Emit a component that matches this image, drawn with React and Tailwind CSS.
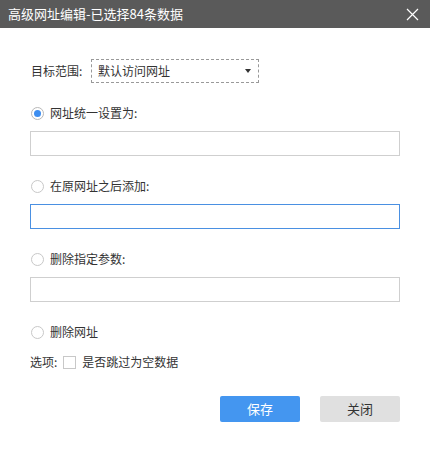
import React, { useState } from 'react';

const font = { fontFamily: '"Noto Sans CJK SC", "Noto Sans", sans-serif' };

const Radio = ({ checked }) => (
    <span
        className={`flex h-[13px] w-[13px] items-center justify-center rounded-full border ${checked ? 'border-[#b8b8b8]' : 'border-[#c8c8c8]'} bg-white`}
    >
        {checked && <span className="h-[7px] w-[7px] rounded-full bg-[#3e8ef0]" />}
    </span>
);

const App = () => {
    const [mode] = useState(0);

    return (
        <div className="h-[452px] w-[430px] bg-white text-[12px] text-[#333]" style={font}>
            {/* barra de título */}
            <div className="flex h-[28px] items-center justify-between bg-[#5a5a5a] pl-[8px] pr-[11px] text-[13px] text-white">
                <span>高级网址编辑-已选择84条数据</span>
                <svg width="13" height="13" viewBox="0 0 13 13" fill="none" stroke="white" strokeWidth="1.2">
                    <path d="M1 1 L12 12 M12 1 L1 12" />
                </svg>
            </div>

            <div className="px-[30px] pt-[31px]">
                <div className="flex items-center">
                    <span className="w-[61px] pl-[1px]">目标范围:</span>
                    <div className="flex h-[24px] w-[168px] items-center justify-between border border-dashed border-[#999] pl-[6px] pr-[7px]">
                        <span>默认访问网址</span>
                        <svg width="6" height="4" viewBox="0 0 6 4">
                            <path d="M0 0 L6 0 L3 4 Z" fill="#333" />
                        </svg>
                    </div>
                </div>

                <div className="mt-[18px] flex h-[24px] items-center gap-[6px] pl-[1px]">
                    <Radio checked={mode === 0} />
                    <span>网址统一设置为:</span>
                </div>
                <div className="mt-[6px] h-[25px] w-[370px] border border-[#cfcfcf]" />

                <div className="mt-[18px] flex h-[24px] items-center gap-[6px] pl-[1px]">
                    <Radio checked={mode === 1} />
                    <span>在原网址之后添加:</span>
                </div>
                <div className="mt-[6px] h-[25px] w-[370px] border border-[#4a90e2]" />

                <div className="mt-[18px] flex h-[24px] items-center gap-[6px] pl-[1px]">
                    <Radio checked={mode === 2} />
                    <span>删除指定参数:</span>
                </div>
                <div className="mt-[6px] h-[25px] w-[370px] border border-[#cfcfcf]" />

                <div className="mt-[18px] flex h-[24px] items-center gap-[6px] pl-[1px]">
                    <Radio checked={mode === 3} />
                    <span>删除网址</span>
                </div>

                <div className="mt-[6px] flex h-[24px] items-center">
                    <span>选项:</span>
                    <span className="ml-[6px] h-[13px] w-[13px] border border-[#c8c8c8] bg-white" />
                    <span className="ml-[6px]">是否跳过为空数据</span>
                </div>

                <div className="mt-[22px] flex justify-end gap-[20px]">
                    <button className="h-[26px] w-[80px] rounded-[2px] bg-[#4496f0] text-[13px] text-white">保存</button>
                    <button className="h-[26px] w-[80px] rounded-[2px] bg-[#e0e0e0] text-[13px] text-[#333]">关闭</button>
                </div>
            </div>
        </div>
    );
};

export default App;
